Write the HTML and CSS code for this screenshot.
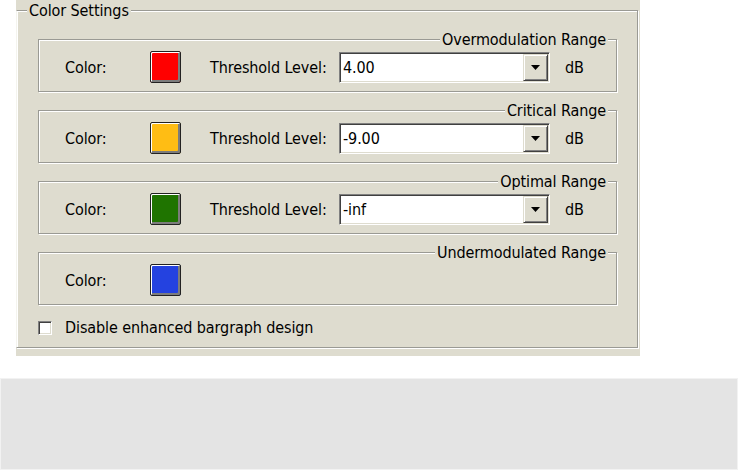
FILE: index.html
```html
<!DOCTYPE html>
<html>
<head>
<meta charset="utf-8">
<link rel="stylesheet" href="styles.css">
</head>
<body>
<div class="panel">
  <div class="group">
    <span class="title title-left">Color Settings</span>

    <div class="range">
      <span class="title title-right">Overmodulation Range</span>
      <div class="row">
        <span class="lbl-color">Color:</span>
        <span class="swatch sw-red"></span>
        <span class="lbl-thr">Threshold Level:</span>
        <div class="combo"><span class="val">4.00</span><span class="drop"><svg width="9" height="5" viewBox="0 0 9 5"><polygon points="0,0 9,0 4.5,5" fill="#000"/></svg></span></div>
        <span class="unit">dB</span>
      </div>
    </div>

    <div class="range">
      <span class="title title-right">Critical Range</span>
      <div class="row">
        <span class="lbl-color">Color:</span>
        <span class="swatch sw-amber"></span>
        <span class="lbl-thr">Threshold Level:</span>
        <div class="combo"><span class="val">-9.00</span><span class="drop"><svg width="9" height="5" viewBox="0 0 9 5"><polygon points="0,0 9,0 4.5,5" fill="#000"/></svg></span></div>
        <span class="unit">dB</span>
      </div>
    </div>

    <div class="range">
      <span class="title title-right">Optimal Range</span>
      <div class="row">
        <span class="lbl-color">Color:</span>
        <span class="swatch sw-green"></span>
        <span class="lbl-thr">Threshold Level:</span>
        <div class="combo"><span class="val">-inf</span><span class="drop"><svg width="9" height="5" viewBox="0 0 9 5"><polygon points="0,0 9,0 4.5,5" fill="#000"/></svg></span></div>
        <span class="unit">dB</span>
      </div>
    </div>

    <div class="range">
      <span class="title title-right">Undermodulated Range</span>
      <div class="row">
        <span class="lbl-color">Color:</span>
        <span class="swatch sw-blue"></span>
      </div>
    </div>

    <label class="check"><span class="checkbox"></span><span>Disable enhanced bargraph design</span></label>
  </div>
</div>
<div class="footer"></div>
</body>
</html>
```

FILE: styles.css
```css
html, body {
  margin: 0;
  padding: 0;
  background: #ffffff;
}

body {
  font-family: "DejaVu Sans Condensed", "DejaVu Sans", sans-serif;
  font-stretch: condensed;
  font-size: 16px;
  letter-spacing: -0.1px;
  color: #000;
}

.panel {
  margin-left: 16px;
  width: 624px;
  height: 356px;
  padding-top: 10px;
  box-sizing: border-box;
  background: #dedccf;
}

.group {
  width: 622px;
  height: 338px;
  box-sizing: border-box;
  border: 1px solid #9a9a94;
  border-left-color: #f4f4ee;
  box-shadow: inset 1px 1px 0 #fff, 1px 1px 0 #fff;
  display: flex;
  flex-direction: column;
}

.title {
  height: 16px;
  line-height: 16px;
  padding: 0 2px;
  background: #dedccf;
  white-space: nowrap;
}

.title-left {
  align-self: flex-start;
  margin: -8px 0 -8px 10px;
}

.title-right {
  align-self: flex-end;
  margin: -8px 8px -8px 0;
}

.range {
  margin-left: 21px;
  margin-top: 18px;
  width: 579px;
  height: 53px;
  box-sizing: border-box;
  border: 1px solid #9a9a94;
  box-shadow: inset 1px 1px 0 #fff, 1px 1px 0 #fff;
  display: flex;
  flex-direction: column;
}

.group > .title + .range {
  margin-top: 28px;
}

.row {
  height: 51px;
  box-sizing: border-box;
  padding: 3px 0 0 26px;
  display: flex;
  align-items: center;
}

.lbl-color {
  width: 85px;
}

.swatch {
  width: 31px;
  height: 32px;
  box-sizing: border-box;
  border: 1px solid #222222;
  border-radius: 2px;
  box-shadow: inset 1px 1px 0 #ffffff, inset -2px -2px 0 #7c7c7c;
  margin-right: 29px;
}

.sw-red { background: #ff0000; }
.sw-amber { background: #ffbd14; }
.sw-green { background: #1f7400; }
.sw-blue { background: #2442e0; }

.lbl-thr {
  width: 129px;
}

.combo {
  width: 211px;
  height: 31px;
  box-sizing: border-box;
  border: 1px solid;
  border-color: #808080 #ffffff #ffffff #808080;
  box-shadow: inset 1px 1px 0 #404040, inset -1px -1px 0 #dedccf;
  background: #ffffff;
  display: flex;
  align-items: stretch;
  padding: 1px;
}

.val {
  flex: 1;
  padding-left: 2px;
  line-height: 27px;
}

.drop {
  width: 25px;
  box-sizing: border-box;
  border: 1px solid;
  border-color: #dedccf #404040 #404040 #dedccf;
  box-shadow: inset 1px 1px 0 #ffffff, inset -1px -1px 0 #808080;
  background: #dedccf;
  display: flex;
  align-items: center;
  justify-content: center;
}

.drop svg {
  display: block;
  margin-top: 1px;
}

.unit {
  margin-left: 15px;
}

.check {
  margin: 15px 0 0 21px;
  height: 15px;
  display: flex;
  align-items: center;
  line-height: 16px;
}

.checkbox {
  width: 14px;
  height: 14px;
  box-sizing: border-box;
  border: 1px solid;
  border-color: #808080 #ffffff #ffffff #808080;
  box-shadow: inset 1px 1px 0 #404040, inset -1px -1px 0 #dedccf;
  background: #ffffff;
  margin-right: 13px;
}

.footer {
  margin-top: 22px;
  width: 738px;
  height: 92px;
  box-sizing: border-box;
  border: 1px solid #f2f2f2;
  background: #e4e4e4;
}
```
